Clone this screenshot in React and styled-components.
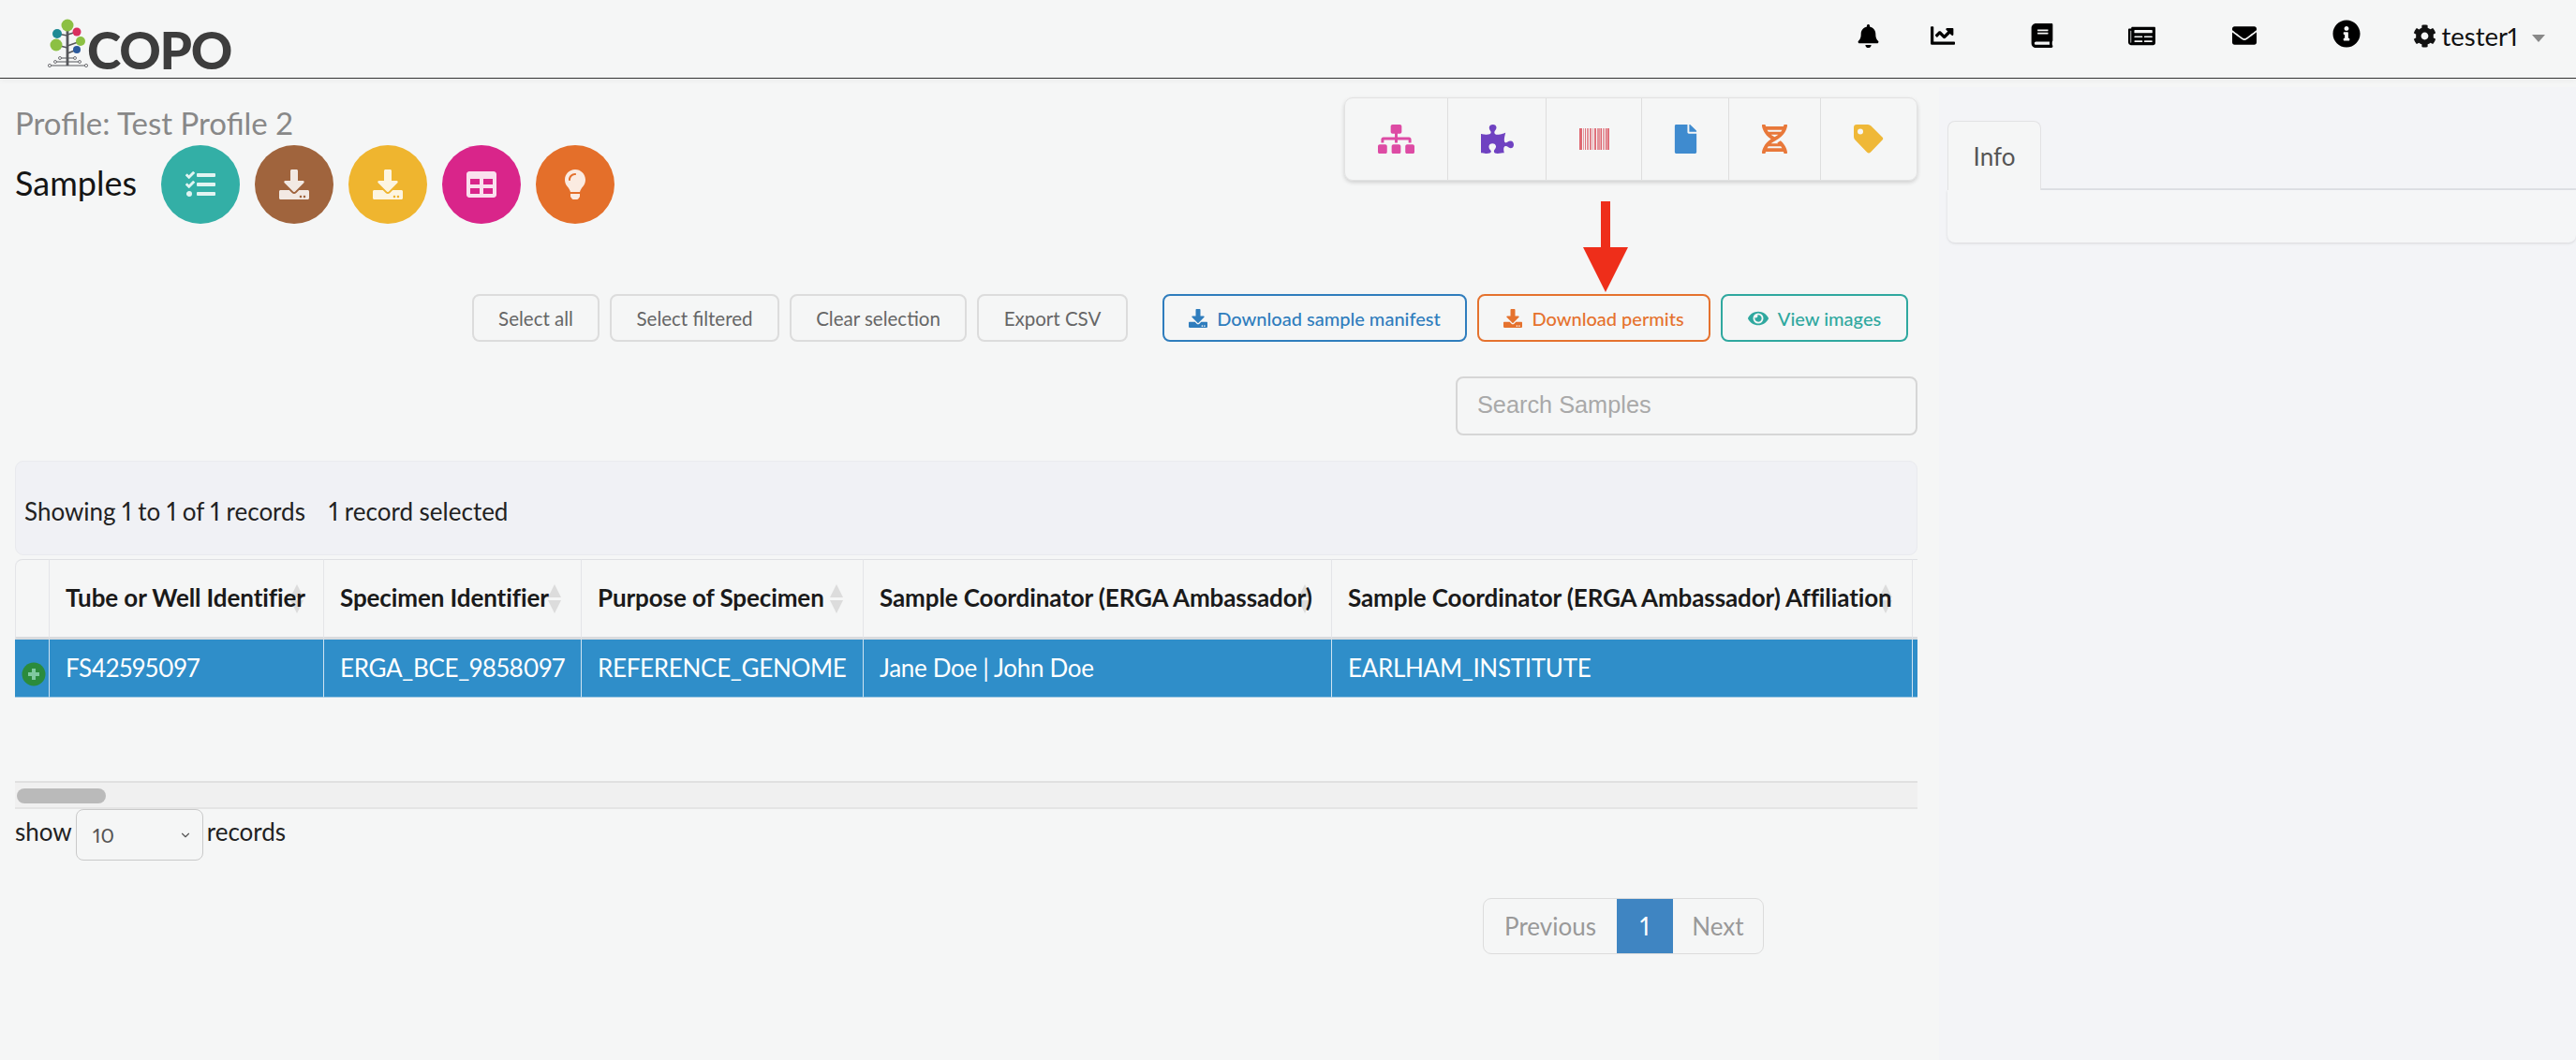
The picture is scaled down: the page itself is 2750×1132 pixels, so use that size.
import React from "react";
import styled, { createGlobalStyle } from "styled-components";
import {
  FaBell, FaChartLine, FaBook, FaNewspaper, FaEnvelope, FaInfoCircle, FaCog,
  FaSitemap, FaPuzzlePiece, FaFile, FaDna, FaEye, FaDownload, FaTasks, FaTable, FaLightbulb,
} from "react-icons/fa";
import { ChevronDown } from "lucide-react";

const Global = createGlobalStyle`
  html, body { margin: 0; padding: 0; background: #f5f6f6; overflow: hidden; }
  body {
    font-family: Lato, "Liberation Sans", sans-serif;
    font-variant-numeric: proportional-nums;
    color: #222;
  }
  * { box-sizing: border-box; }
`;

const Page = styled.div`
  width: 2750px;
  height: 1132px;
  display: flex;
  flex-direction: column;
  overflow: hidden;
`;

const NavBar = styled.header`
  height: 84px;
  flex: none;
  display: flex;
  align-items: flex-start;
  justify-content: space-between;
  border-bottom: 1px solid #333;
  box-shadow: 0 2px 6px rgba(0, 0, 0, 0.05);
`;

const Logo = styled.div`
  display: flex;
  align-items: flex-start;
  margin: 20px 0 0 50px;
`;

const LogoText = styled.span`
  font-family: Lato, sans-serif;
  font-weight: 900;
  font-size: 55px;
  line-height: 40px;
  padding-top: 13px;
  margin-left: -3px;
  letter-spacing: -1.2px;
  color: #3d3d3d;
`;

const NavItems = styled.nav`
  display: flex;
  align-items: center;
  height: 76px;
  margin-right: 33px;
`;

const NavSlot = styled.span`
  width: ${(p) => p.$w}px;
  display: flex;
  justify-content: center;
  align-items: center;
  color: #000;
  transform: translateY(${(p) => p.$dy || 0}px);
`;

const UserMenu = styled.span`
  display: flex;
  align-items: center;
  margin-left: 31px;
  color: #111;
  font-size: 27.5px;
  gap: 6px;
`;

const Caret = styled.span`
  width: 0;
  height: 0;
  margin: 5px 0 0 9px;
  border-left: 7px solid transparent;
  border-right: 7px solid transparent;
  border-top: 8px solid #888;
`;

const Body = styled.div`
  flex: 1;
  display: flex;
  min-height: 0;
`;

const Main = styled.main`
  position: relative;
  width: 2070px;
  flex: none;
  padding: 20px 23px 0 16px;
`;

const TopRow = styled.div`
  display: flex;
  justify-content: space-between;
  align-items: flex-start;
`;

const ProfileTitle = styled.div`
  font-size: 33px;
  line-height: 38px;
  margin-top: 8px;
  color: #888;
`;

const SamplesRow = styled.div`
  display: flex;
  align-items: center;
  margin-top: 5px;
`;

const SamplesTitle = styled.h1`
  margin: 0 26px 4px 0;
  font-size: 36px;
  font-weight: 400;
  line-height: 44px;
  color: #151515;
`;

const CircleRow = styled.div`
  display: flex;
  gap: 16px;
`;

const Circle = styled.span`
  width: 84px;
  height: 84px;
  border-radius: 50%;
  display: flex;
  align-items: center;
  justify-content: center;
  background: ${(p) => p.$bg};
  color: rgba(255, 255, 255, 0.86);
`;

const Toolbox = styled.div`
  display: flex;
  height: 89px;
  border: 1px solid #e2e2e2;
  border-radius: 9px;
  box-shadow: 0 2px 4px rgba(0, 0, 0, 0.16);
`;

const ToolCell = styled.span`
  width: ${(p) => p.$w}px;
  display: flex;
  align-items: center;
  justify-content: center;
  color: ${(p) => p.$c};
  & + & {
    border-left: 1px solid #dedede;
  }
`;

const ActionRow = styled.div`
  display: flex;
  justify-content: flex-end;
  margin-top: 75px;
  padding-right: 10px;
  gap: 11px;
`;

const PlainBtn = styled.button`
  height: 51px;
  width: ${(p) => p.$w}px;
  border: 2px solid #dcdcdc;
  border-radius: 8px;
  background: transparent;
  font: 400 20.5px Lato, sans-serif;
  color: #666;
  padding: 0;
`;

const OutlineBtn = styled.button`
  height: 51px;
  width: ${(p) => p.$w}px;
  margin-left: ${(p) => p.$ml || 0}px;
  display: flex;
  align-items: center;
  justify-content: center;
  gap: 10px;
  border: 2px solid ${(p) => p.$c};
  border-radius: 8px;
  background: transparent;
  font: 500 20px Lato, sans-serif;
  color: ${(p) => p.$c};
  padding: 0;
`;

const SearchRow = styled.div`
  display: flex;
  justify-content: flex-end;
  margin-top: 37px;
`;

const SearchBox = styled.div`
  width: 493px;
  height: 63px;
  border: 2px solid #d6d6d6;
  border-radius: 8px;
  padding: 0 21px 2px;
  display: flex;
  align-items: center;
  font-family: "Liberation Sans", Arial, sans-serif;
  font-size: 25.3px;
  color: #a9a9a9;
`;

const InfoBar = styled.div`
  height: 101px;
  margin-top: 27px;
  padding: 6px 9px 0;
  display: flex;
  align-items: center;
  gap: 25px;
  background: #f0f1f5;
  border: 1px solid #e9eaee;
  border-radius: 9px;
  font-size: 26px;
  color: #222;
`;

const Table = styled.table`
  width: 2031px;
  margin-top: 4px;
  table-layout: fixed;
  border-collapse: separate;
  border-spacing: 0;
`;

const Th = styled.th`
  position: relative;
  height: 86px;
  padding: 0 0 2px 17px;
  text-align: left;
  font-family: Lato, sans-serif;
  font-size: 26px;
  font-weight: 700;
  letter-spacing: -0.1px;
  color: #1a1a1a;
  white-space: nowrap;
  border-top: 1px solid #dfe0e3;
  border-bottom: 3px solid #d9dbde;
  & + & {
    border-left: 1px solid #e4e5e8;
  }
  &:first-child {
    border-left: 1px solid #e4e5e8;
    border-top-left-radius: 8px;
  }
`;

const ThLabel = styled.span`
  position: relative;
  z-index: 1;
`;

const SortIcons = styled.span`
  position: absolute;
  right: 21px;
  top: 26px;
  z-index: 0;
  display: flex;
  flex-direction: column;
  gap: 3px;
  &::before, &::after {
    content: "";
    width: 0;
    height: 0;
    border-left: 7px solid transparent;
    border-right: 7px solid transparent;
  }
  &::before { border-bottom: 14px solid #dcdcdc; }
  &::after { border-top: 14px solid #dcdcdc; }
`;

const Td = styled.td`
  height: 62px;
  padding: 0 0 2px 17px;
  background: #2f8ec9;
  color: #fff;
  font-family: Lato, sans-serif;
  font-size: 26px;
  letter-spacing: -0.3px;
  white-space: nowrap;
  border-bottom: 1px solid #9cc6e0;
  & + & {
    border-left: 1px solid #cfe3f1;
  }
`;

const ExpandCell = styled(Td)`
  padding: 12px 0 0 7px;
  line-height: 0;
`;

const ScrollTrack = styled.div`
  height: 30px;
  margin-top: 89px;
  padding: 6px 0 0 2px;
  background: #f0f0f0;
  border-top: 2px solid #e0e0e0;
  border-bottom: 2px solid #e4e4e4;
`;

const ScrollThumb = styled.div`
  width: 95px;
  height: 16px;
  border-radius: 8px;
  background: #bababa;
`;

const LengthRow = styled.div`
  display: flex;
  align-items: flex-start;
  gap: 4px;
  font-size: 26px;
  line-height: 49px;
  color: #222;
`;

const SelectBox = styled.div`
  width: 136px;
  height: 55px;
  padding: 0 11px 0 17px;
  display: flex;
  align-items: center;
  justify-content: space-between;
  border: 1px solid #c9c9c9;
  border-radius: 8px;
  font-size: 22px;
  color: #555;
`;

const PagerRow = styled.div`
  display: flex;
  justify-content: flex-end;
  margin-top: 40px;
  padding-right: 164px;
`;

const Pager = styled.div`
  display: flex;
  height: 60px;
  border: 1px solid #dcdcdc;
  border-radius: 9px;
  font-size: 26px;
  color: #999;
  overflow: hidden;
`;

const PageItem = styled.span`
  width: ${(p) => p.$w}px;
  display: flex;
  align-items: center;
  justify-content: center;
  color: ${(p) => (p.$active ? "#fff" : "#999")};
  background: ${(p) => (p.$active ? "#3f85c2" : "transparent")};
`;

const Aside = styled.aside`
  flex: 1;
  margin-top: 9px;
  padding: 36px 0 0 9px;
  background: #f3f4f7;
`;

const TabBar = styled.div`
  display: flex;
  height: 74px;
  border-bottom: 2px solid #dfe1e6;
`;

const Tab = styled.div`
  width: 100px;
  height: 74px;
  display: flex;
  align-items: center;
  justify-content: center;
  background: #f5f6f6;
  border: 1px solid #e2e2e4;
  border-bottom: none;
  border-radius: 8px 8px 0 0;
  font-size: 26px;
  color: #555;
`;

const TabPanel = styled.div`
  height: 56px;
  background: #f5f6f7;
  border-radius: 0 0 8px 8px;
  box-shadow: 0 1px 3px rgba(0, 0, 0, 0.12);
`;

const ArrowMark = styled.svg`
  position: absolute;
  left: 1690px;
  top: 131px;
`;

const TreeLogo = () => (
  <svg width="46" height="54" viewBox="0 0 46 54" style={{ display: "block" }}>
    <g stroke="#55565a" fill="none">
      <path d="M22 7V50" strokeWidth="2.8" />
      <path d="M22 18L11 16M22 17L32 14M22 31L10 28M22 29L36 24M22 37L32 33" strokeWidth="1.4" />
      <path d="M4 50H41M9 46H34M14 42H30" strokeWidth="1" />
      <circle cx="3" cy="50" r="1.6" fill="#f5f6f6" strokeWidth="0.8" />
      <circle cx="42" cy="50" r="1.6" fill="#f5f6f6" strokeWidth="0.8" />
      <circle cx="9" cy="46" r="1.5" fill="#f5f6f6" strokeWidth="0.8" />
      <circle cx="35" cy="46" r="1.5" fill="#f5f6f6" strokeWidth="0.8" />
      <circle cx="14" cy="42" r="1.5" fill="#f5f6f6" strokeWidth="0.8" />
      <circle cx="30" cy="42" r="1.5" fill="#f5f6f6" strokeWidth="0.8" />
    </g>
    <circle cx="22" cy="7" r="6.5" fill="#8cc043" />
    <circle cx="11" cy="16" r="5" fill="#1f8a94" />
    <circle cx="32" cy="14" r="4.5" fill="#d9305f" />
    <circle cx="10" cy="28" r="6.5" fill="#8cc043" />
    <circle cx="36" cy="24" r="5" fill="#8cc043" />
    <circle cx="32" cy="33" r="4" fill="#2b5a9c" />
  </svg>
);

const Barcode = () => {
  const bars = [
    [0, 3, 0.85], [4, 1, 0.55], [6, 1, 0.8], [8, 2, 0.6], [11, 2, 0.7], [14, 1, 0.5],
    [16, 2, 0.8], [19, 3, 0.6], [22.5, 1.5, 0.9], [25, 2, 0.55], [28, 1, 0.9], [29.5, 2.5, 0.8],
  ];
  return (
    <svg width="32" height="23" viewBox="0 0 32 23" aria-hidden="true">
      {bars.map(([x, w, o]) => (
        <rect key={x} x={x} y="0" width={w} height="23" fill="#d9505c" opacity={o} />
      ))}
    </svg>
  );
};

const TagIcon = () => (
  <svg width="32" height="31" viewBox="0 0 32 31" aria-hidden="true">
    <path
      fillRule="evenodd"
      fill="#efb838"
      d="M3 0H15Q17 0 18.5 1.5L30.5 13.5Q32 15 30.5 16.5L18 29.5Q16 31.5 14 29.5L1.5 16.5Q0 15 0 13V3Q0 0 3 0ZM7 4.5A3 3 0 1 0 7 10.5A3 3 0 1 0 7 4.5Z"
    />
  </svg>
);

const PlusBadge = () => (
  <svg width="26" height="26" viewBox="0 0 26 26">
    <circle cx="13" cy="13" r="12.5" fill="#2b8b3c" />
    <path d="M13 7V19M7 13H19" stroke="#7fc9a0" strokeWidth="4" />
  </svg>
);

const headers = [
  "Tube or Well Identifier",
  "Specimen Identifier",
  "Purpose of Specimen",
  "Sample Coordinator (ERGA Ambassador)",
  "Sample Coordinator (ERGA Ambassador) Affiliation",
];
const cells = ["FS42595097", "ERGA_BCE_9858097", "REFERENCE_GENOME", "Jane Doe | John Doe", "EARLHAM_INSTITUTE"];

export default function App() {
  return (
    <Page>
      <Global />
      <NavBar>
        <Logo>
          <TreeLogo />
          <LogoText>COPO</LogoText>
        </Logo>
        <NavItems>
          <NavSlot $w={80}><FaBell size={25} /></NavSlot>
          <NavSlot $w={78}><FaChartLine size={26} /></NavSlot>
          <NavSlot $w={134}><FaBook size={26} /></NavSlot>
          <NavSlot $w={80}><FaNewspaper size={29} /></NavSlot>
          <NavSlot $w={138}><FaEnvelope size={26} /></NavSlot>
          <NavSlot $w={80} $dy={-2}><FaInfoCircle size={30} /></NavSlot>
          <UserMenu>
            <FaCog size={25} />
            tester1
            <Caret />
          </UserMenu>
        </NavItems>
      </NavBar>
      <Body>
        <Main>
          <ArrowMark width="48" height="97" viewBox="0 0 48 97">
            <path d="M19 0H29V49H48L24 97L0 49H19Z" fill="#ee2e1a" />
          </ArrowMark>
          <TopRow>
            <div>
              <ProfileTitle>Profile: Test Profile 2</ProfileTitle>
              <SamplesRow>
                <SamplesTitle>Samples</SamplesTitle>
                <CircleRow>
                  <Circle $bg="#33afa6"><FaTasks size={32} /></Circle>
                  <Circle $bg="#a0643d"><FaDownload size={32} /></Circle>
                  <Circle $bg="#efb52f"><FaDownload size={32} /></Circle>
                  <Circle $bg="#d9258a"><FaTable size={32} /></Circle>
                  <Circle $bg="#e46f2a"><FaLightbulb size={32} /></Circle>
                </CircleRow>
              </SamplesRow>
            </div>
            <Toolbox>
              <ToolCell $w={109} $c="#dd4ba4"><FaSitemap size={39} /></ToolCell>
              <ToolCell $w={105} $c="#6f42c1"><FaPuzzlePiece size={35} /></ToolCell>
              <ToolCell $w={102} $c="#dd5f68"><Barcode /></ToolCell>
              <ToolCell $w={93} $c="#3f8bcf"><FaFile size={31} /></ToolCell>
              <ToolCell $w={98} $c="#e8783a"><FaDna size={31} /></ToolCell>
              <ToolCell $w={103} $c="#efb838"><TagIcon /></ToolCell>
            </Toolbox>
          </TopRow>
          <ActionRow>
            <PlainBtn $w={136}>Select all</PlainBtn>
            <PlainBtn $w={181}>Select filtered</PlainBtn>
            <PlainBtn $w={189}>Clear selection</PlainBtn>
            <PlainBtn $w={161}>Export CSV</PlainBtn>
            <OutlineBtn $w={325} $ml={26} $c="#2f7dbd"><FaDownload size={20} />Download sample manifest</OutlineBtn>
            <OutlineBtn $w={249} $c="#e5722e"><FaDownload size={20} />Download permits</OutlineBtn>
            <OutlineBtn $w={200} $c="#2fa89f"><FaEye size={22} />View images</OutlineBtn>
          </ActionRow>
          <SearchRow>
            <SearchBox>Search Samples</SearchBox>
          </SearchRow>
          <InfoBar>
            <span>Showing 1 to 1 of 1 records</span>
            <span>1 record selected</span>
          </InfoBar>
          <Table>
            <colgroup>
              {[36, 293, 275, 301, 500, 620, 6].map((w, i) => <col key={i} style={{ width: w }} />)}
            </colgroup>
            <thead>
              <tr>
                <Th />
                {headers.map((h) => <Th key={h}><ThLabel>{h}</ThLabel><SortIcons /></Th>)}
                <Th />
              </tr>
            </thead>
            <tbody>
              <tr>
                <ExpandCell><PlusBadge /></ExpandCell>
                {cells.map((c) => <Td key={c}>{c}</Td>)}
                <Td />
              </tr>
            </tbody>
          </Table>
          <ScrollTrack><ScrollThumb /></ScrollTrack>
          <LengthRow>
            show
            <SelectBox>10<ChevronDown size={14} color="#555" /></SelectBox>
            records
          </LengthRow>
          <PagerRow>
            <Pager>
              <PageItem $w={142}>Previous</PageItem>
              <PageItem $w={60} $active>1</PageItem>
              <PageItem $w={96}>Next</PageItem>
            </Pager>
          </PagerRow>
        </Main>
        <Aside>
          <TabBar><Tab>Info</Tab></TabBar>
          <TabPanel />
        </Aside>
      </Body>
    </Page>
  );
}
